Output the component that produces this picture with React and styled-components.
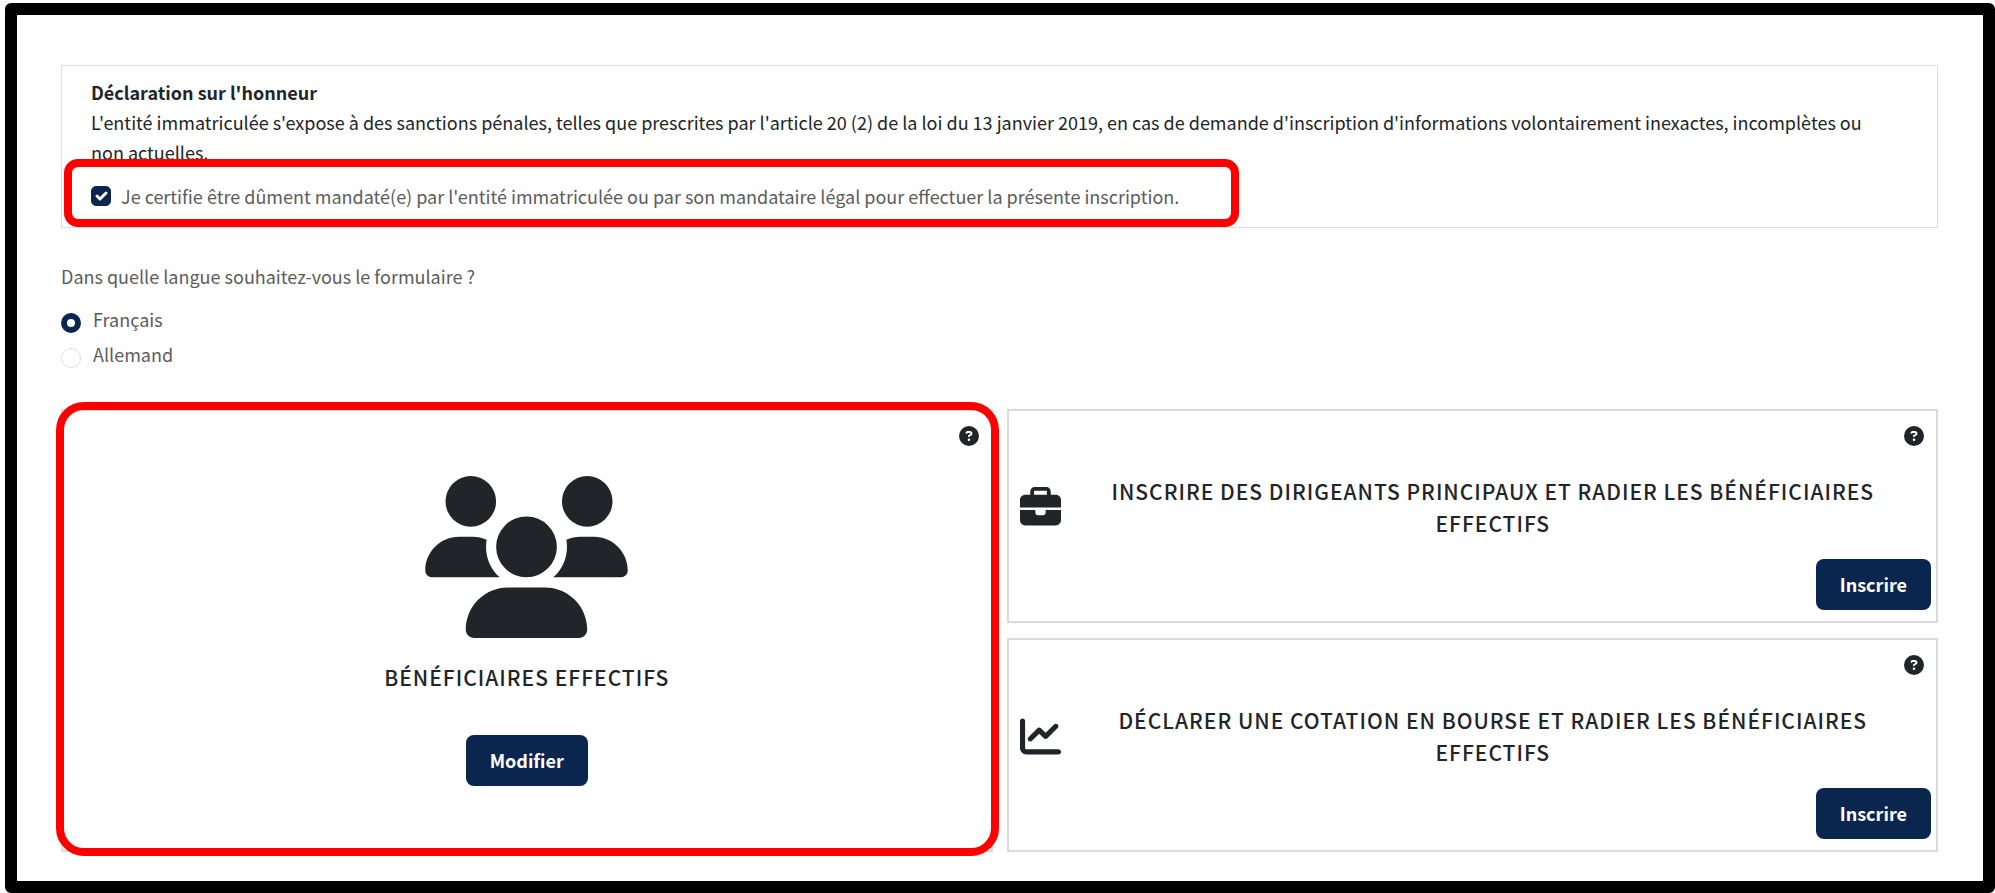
import React, { useState } from 'react';
import styled, { createGlobalStyle } from 'styled-components';
import { FaBriefcase, FaChartLine, FaCircleQuestion, FaUsers } from 'react-icons/fa6';

const actions = [
  {
    id: 'dirigeants',
    title: 'Inscrire des dirigeants principaux et radier les bénéficiaires effectifs',
    Icon: FaBriefcase,
  },
  {
    id: 'cotation',
    title: 'Déclarer une cotation en bourse et radier les bénéficiaires effectifs',
    Icon: FaChartLine,
  },
];

const languages = [
  { value: 'fr', label: 'Français' },
  { value: 'de', label: 'Allemand' },
];

function App() {
  const [certified, setCertified] = useState(true);
  const [language, setLanguage] = useState('fr');

  return (
    <>
      <GlobalStyle />
      <Frame>
        <Declaration>
          <DeclarationTitle>Déclaration sur l'honneur</DeclarationTitle>
          <DeclarationText>
            L'entité immatriculée s'expose à des sanctions pénales, telles que prescrites par
            l'article 20 (2) de la loi du 13 janvier 2019, en cas de demande d'inscription
            d'informations volontairement inexactes, incomplètes ou non actuelles.
          </DeclarationText>
          <Certify>
            <CheckWrapper>
              <Checkbox
                id="certify"
                type="checkbox"
                checked={certified}
                onChange={event => setCertified(event.target.checked)}
              />
              {certified ? (
                <CheckMark viewBox="0 0 20 20">
                  <path d="M6 10l3 3 6-6" />
                </CheckMark>
              ) : null}
            </CheckWrapper>
            <label htmlFor="certify">
              Je certifie être dûment mandaté(e) par l'entité immatriculée ou par son mandataire
              légal pour effectuer la présente inscription.
            </label>
            <CertifyHighlight />
          </Certify>
        </Declaration>

        <Languages>
          <Question>Dans quelle langue souhaitez-vous le formulaire ?</Question>
          {languages.map(({ value, label }) => (
            <LanguageRow key={value}>
              <Radio
                type="radio"
                name="language"
                value={value}
                checked={language === value}
                onChange={() => setLanguage(value)}
              />
              {label}
            </LanguageRow>
          ))}
        </Languages>

        <Cards>
          <MainCard>
            <HelpButton aria-label="Aide">
              <FaCircleQuestion />
            </HelpButton>
            <UsersIcon />
            <CardTitle>Bénéficiaires effectifs</CardTitle>
            <Button>Modifier</Button>
            <CardHighlight />
          </MainCard>
          <SideCards>
            {actions.map(({ id, title, Icon }) => (
              <SideCard key={id}>
                <HelpButton aria-label="Aide">
                  <FaCircleQuestion />
                </HelpButton>
                <SideHeader>
                  <Icon size={41} />
                  <CardTitle>{title}</CardTitle>
                </SideHeader>
                <Button>Inscrire</Button>
              </SideCard>
            ))}
          </SideCards>
        </Cards>
      </Frame>
    </>
  );
}

const GlobalStyle = createGlobalStyle`
  * {
    box-sizing: border-box;
  }
  body {
    margin: 0;
    background: #fff;
    color: #212529;
    font-family: 'Noto Sans CJK SC', 'Noto Sans', sans-serif;
    font-size: 18px;
    line-height: 30px;
  }
`;

const Frame = styled.main`
  margin: 3px 0 0 5px;
  padding: 50px 45px 29px 44px;
  border: 12px solid #000;
  border-radius: 6px;
`;

const Declaration = styled.section`
  padding: 11px 48px 16px 29px;
  border: 1px solid #dedede;
`;

const DeclarationTitle = styled.h1`
  margin: 0;
  font-size: 18px;
  line-height: 30px;
  font-weight: 700;
`;

const DeclarationText = styled.p`
  margin: 0;
`;

const Certify = styled.div`
  position: relative;
  display: flex;
  width: fit-content;
  align-items: center;
  gap: 10px;
  margin-top: 14px;
  color: #5c5c5c;
`;

const CheckWrapper = styled.span`
  display: grid;
  place-items: center;
  > * {
    grid-area: 1 / 1;
  }
`;

const Checkbox = styled.input`
  appearance: none;
  width: 20px;
  height: 20px;
  margin: 0;
  border: 1px solid #dedede;
  border-radius: 5px;
  &:checked {
    border-color: #0a254e;
    background: #0a254e;
  }
`;

const CheckMark = styled.svg`
  width: 20px;
  height: 20px;
  fill: none;
  stroke: #fff;
  stroke-width: 3;
  stroke-linecap: round;
  stroke-linejoin: round;
  pointer-events: none;
`;

const Highlight = styled.div`
  position: absolute;
  border: 8px solid #f00;
  pointer-events: none;
`;

const CertifyHighlight = styled(Highlight)`
  inset: -22px -60px -16px -27px;
  border-radius: 14px;
`;

const Languages = styled.fieldset`
  margin: 33px 0 37px;
  padding: 0;
  border: 0;
  color: #5c5c5c;
`;

const Question = styled.legend`
  margin-bottom: 11px;
  padding: 0;
`;

const LanguageRow = styled.label`
  display: flex;
  width: fit-content;
  align-items: center;
  gap: 12px;
  line-height: 35px;
`;

const Radio = styled.input`
  appearance: none;
  width: 20px;
  height: 20px;
  margin: 6px 0 0;
  border: 1px solid #dedede;
  border-radius: 50%;
  &:checked {
    border: 6px solid #0a254e;
  }
`;

const Cards = styled.div`
  display: grid;
  grid-template-columns: 1fr 1fr;
  gap: 14px;
`;

const SideCards = styled.div`
  display: flex;
  flex-direction: column;
  gap: 15px;
`;

const Card = styled.section`
  position: relative;
  display: flex;
  flex-direction: column;
  border: 2px solid #dadada;
`;

const MainCard = styled(Card)`
  align-items: center;
  padding-top: 65px;
  > h2 {
    margin: 23px 0 42px;
  }
`;

const SideCard = styled(Card)`
  align-items: flex-end;
  gap: 20px;
  padding: 64px 5px 11px 11px;
`;

const SideHeader = styled.div`
  display: flex;
  align-self: stretch;
  align-items: center;
  padding-right: 6px;
  > svg {
    flex: none;
  }
  > h2 {
    flex: 1;
  }
`;

const CardTitle = styled.h2`
  margin: 0;
  font-size: 21px;
  line-height: 32px;
  font-weight: 500;
  letter-spacing: 1px;
  text-align: center;
  text-transform: uppercase;
`;

const UsersIcon = styled(FaUsers)`
  width: 203px;
  height: 162px;
`;

const HelpButton = styled.button`
  position: absolute;
  top: 15px;
  right: 12px;
  display: flex;
  padding: 0;
  border: 0;
  background: none;
  color: inherit;
  font-size: 20px;
  cursor: pointer;
`;

const Button = styled.button`
  height: 51px;
  padding: 0 24px 2px;
  border: 0;
  border-radius: 8px;
  background: #0a254e;
  color: #fff;
  font-family: inherit;
  font-size: 18px;
  font-weight: 700;
  cursor: pointer;
`;

const CardHighlight = styled(Highlight)`
  inset: -9px -8px -6px -7px;
  border-radius: 28px;
`;

export default App;
